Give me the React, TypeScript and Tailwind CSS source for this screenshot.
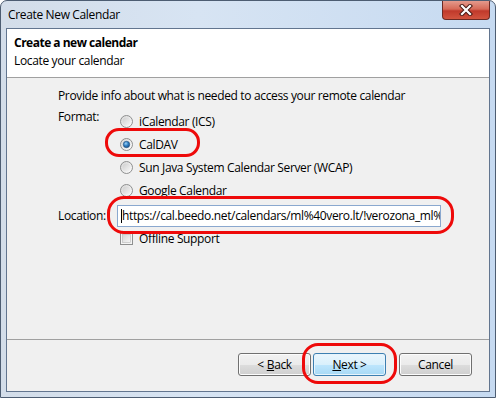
import React from "react";

const font = { fontFamily: '"Open Sans", "Noto Sans", sans-serif' };

function Radio({ checked }: { checked?: boolean }) {
  return (
    <svg width="13" height="13" viewBox="0 0 13 13" className="shrink-0">
      <defs>
        <linearGradient id="rg1" x1="0" y1="0" x2="1" y2="1">
          <stop offset="0" stopColor="#d6d6d6" />
          <stop offset="1" stopColor="#ffffff" />
        </linearGradient>
        <linearGradient id="rg2" x1="0" y1="0" x2="1" y2="1">
          <stop offset="0" stopColor="#cfcfcf" />
          <stop offset="1" stopColor="#f6f6f6" />
        </linearGradient>
        <radialGradient id="rg3" cx="0.4" cy="0.35" r="0.7">
          <stop offset="0" stopColor="#9fd3f7" />
          <stop offset="0.5" stopColor="#2f7fc4" />
          <stop offset="1" stopColor="#1b4f84" />
        </radialGradient>
      </defs>
      <circle cx="6.5" cy="6.5" r="6" fill="url(#rg1)" stroke="#8e8f8f" strokeWidth="1" />
      <circle cx="6.5" cy="6.5" r="4" fill="url(#rg2)" />
      {checked && <circle cx="6.5" cy="6.5" r="3.2" fill="url(#rg3)" stroke="#1e4e7e" strokeWidth="0.6" />}
    </svg>
  );
}

function Checkbox() {
  return (
    <svg width="13" height="13" viewBox="0 0 13 13" className="shrink-0">
      <defs>
        <linearGradient id="cg1" x1="0" y1="0" x2="1" y2="1">
          <stop offset="0" stopColor="#d4d4d4" />
          <stop offset="1" stopColor="#f7f7f7" />
        </linearGradient>
      </defs>
      <rect x="0.5" y="0.5" width="12" height="12" fill="#f4f4f4" stroke="#8e8f8f" />
      <rect x="2.5" y="2.5" width="8" height="8" fill="url(#cg1)" stroke="#b8b8b8" strokeWidth="0.6" />
    </svg>
  );
}

function RadioRow({ label, checked }: { label: string; checked?: boolean }) {
  return (
    <div className="h-[23px] flex items-center pl-[3px] gap-[6px]">
      <Radio checked={checked} />
      <span>{label}</span>
    </div>
  );
}

function Btn({ children, primary, extra }: { children: React.ReactNode; primary?: boolean; extra?: string }) {
  return (
    <div
      className={
        "w-[73px] h-[23px] rounded-[3px] border flex items-center justify-center text-[12px] text-black " +
        (primary
          ? "border-[#3c7fb1] bg-[linear-gradient(#eaf6fd_0%,#d9f0fc_50%,#bee6fd_51%,#a7d9f5_100%)] shadow-[inset_0_0_0_1px_#e6f4fc] "
          : "border-[#707070] bg-[linear-gradient(#f2f2f2_0%,#ebebeb_50%,#dddddd_51%,#cfcfcf_100%)] shadow-[inset_0_0_0_1px_#fcfcfc] ") +
        (extra || "")
      }
    >
      {children}
    </div>
  );
}

export default function App() {
  return (
    <div style={font} className="relative w-[496px] h-[398px] text-[12px] tracking-[-0.35px] text-black">
      <div className="w-full h-full flex flex-col border border-[#4d5d72] rounded-t-[7px] bg-[linear-gradient(90deg,#d3dde9_0%,#d7e4f3_40%,#c6daf1_100%)] overflow-hidden">
        {/* title bar */}
        <div className="h-[27px] shrink-0 flex justify-between">
          <div className="pl-[7px] flex items-center leading-none text-[12px] text-black">Create New Calendar</div>
          <div className="self-start mr-[5px] w-[48px] h-[19px] rounded-b-[4px] border border-t-0 border-[#6b2a24] bg-[linear-gradient(#e49a8c_0%,#d66a58_45%,#c0392b_55%,#d2543f_100%)] flex items-center justify-center">
            <svg width="14" height="12" viewBox="0 0 14 12">
              <path d="M3 2 L11 10 M11 2 L3 10" stroke="#4a1a14" strokeWidth="4.2" strokeLinecap="square" />
              <path d="M3 2 L11 10 M11 2 L3 10" stroke="#ffffff" strokeWidth="2.2" strokeLinecap="square" />
            </svg>
          </div>
        </div>
        {/* client */}
        <div className="flex-1 mx-[5px] mb-[5px] border border-[#62758f] bg-[#f0f0f0] flex flex-col">
          <div className="h-[49px] shrink-0 bg-white border-b border-[#a0a0a0] pl-[7px] pt-[5px] leading-[18px]">
            <div className="font-bold tracking-[-0.5px]">Create a new calendar</div>
            <div>Locate your calendar</div>
          </div>
          <div className="flex-1 flex flex-col pl-[51px] pt-[10px]">
            <div className="h-[16px] leading-[16px]">Provide info about what is needed to access your remote calendar</div>
            <div className="mt-[6px] flex">
              <div className="w-[59px] leading-[14px]">Format:</div>
              <div className="flex flex-col">
                <RadioRow label="iCalendar (ICS)" />
                <RadioRow label="CalDAV" checked />
                <RadioRow label="Sun Java System Calendar Server (WCAP)" />
                <RadioRow label="Google Calendar" />
              </div>
            </div>
            <div className="mt-[3px] flex items-center">
              <div className="w-[59px]">Location:</div>
              <div className="w-[324px] h-[22px] border border-[#8aa8cf] bg-white flex items-center pl-[3px] overflow-hidden whitespace-nowrap">
                <span className="w-px h-[14px] bg-black shrink-0" />
                <span>https://cal.beedo.net/calendars/ml%40vero.lt/!verozona_ml%40vero.lt</span>
              </div>
            </div>
            <div className="h-[23px] flex items-center pl-[62px] gap-[6px]">
              <Checkbox />
              <span>Offline Support</span>
            </div>
          </div>
          <div className="h-[52px] shrink-0 border-t border-[#a0a0a0] flex justify-end items-start pt-[13px] pr-[17px]">
            <Btn>
              &lt; <span className="underline ml-[3px]">B</span>ack
            </Btn>
            <Btn primary extra="ml-[2px]">
              <span className="underline">N</span>ext &gt;
            </Btn>
            <Btn extra="ml-[13px]">Cancel</Btn>
          </div>
        </div>
      </div>
      {/* red annotations */}
      <div className="absolute left-[105px] top-[128px] w-[95px] h-[29px] border-[3px] border-[#ee0a0a] rounded-[14px]" />
      <div className="absolute left-[107px] top-[196px] w-[347px] h-[38px] border-[3px] border-[#ee0a0a] rounded-[17px]" />
      <div className="absolute left-[302px] top-[343px] w-[95px] h-[41px] border-[3px] border-[#ee0a0a] rounded-[16px]" />
    </div>
  );
}
